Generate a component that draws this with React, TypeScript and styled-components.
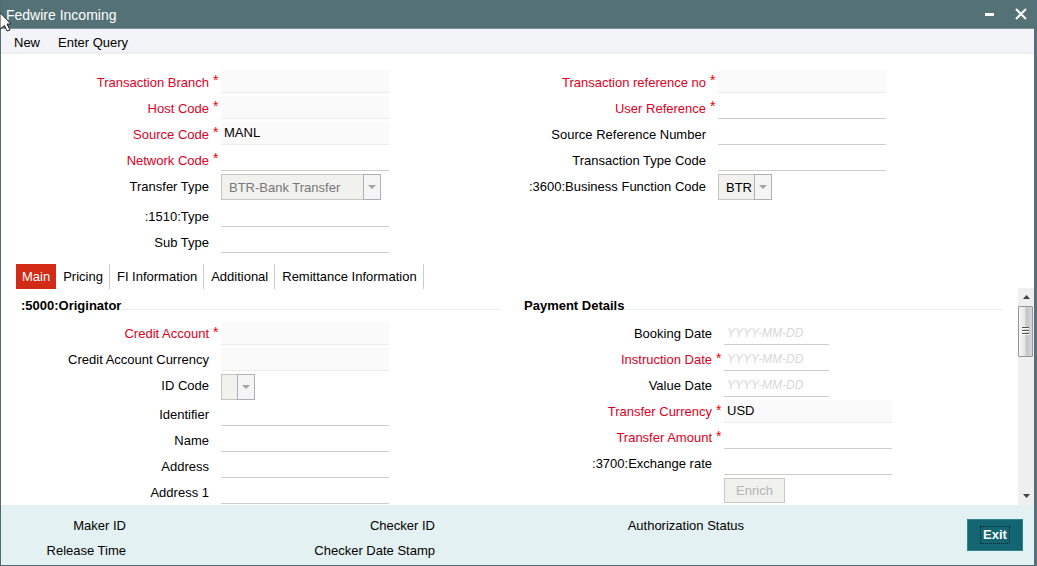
import React, { useId } from "react";
import styled, { createGlobalStyle } from "styled-components";

const GlobalStyle = createGlobalStyle`
  *, *::before, *::after { box-sizing: border-box; }
  body {
    margin: 0;
    background: #fff;
    color: #000;
    font-family: "Liberation Sans", Arial, sans-serif;
    font-size: 13px;
  }
  button, input, select { font: inherit; color: inherit; margin: 0; }
`;

const Window = styled.div`
  position: relative;
  display: flex;
  flex-direction: column;
  min-height: 100vh;
  border: 1px solid #4f6b72;
  border-top: 0;
  border-right: 3px solid #54707a;
  background: #fff;
`;

const TitleBar = styled.header`
  display: flex;
  align-items: center;
  height: 29px;
  padding: 0 7px 0 5px;
  background: #547176;
  border-bottom: 1px solid #7d9599;
  color: #fff;
`;

const Title = styled.h1`
  flex: 1;
  margin: 0;
  padding-top: 2px;
  font-size: 14px;
  font-weight: 400;
  line-height: 26px;
`;

const WindowButton = styled.button`
  display: flex;
  width: 12px;
  height: 12px;
  margin-left: 19px;
  padding: 0;
  border: 0;
  background: none;
`;

const MenuBar = styled.nav`
  display: flex;
  gap: 18px;
  height: 25px;
  padding: 0 13px;
  background: #f3f4f8;
  border-bottom: 2px solid #efeff1;
`;

const MenuItem = styled.button`
  height: 27px;
  padding: 0;
  border: 0;
  background: none;
  line-height: 27px;
`;

const HeaderForm = styled.section`
  display: grid;
  grid-template-columns: 1fr 1fr;
  padding: 16px 24px 8px 15px;
`;

const Row = styled.div<{ $tall?: number }>`
  display: flex;
  align-items: flex-start;
  height: ${(p) => p.$tall ?? 26}px;
`;

const Label = styled.label<{ $required?: boolean }>`
  width: 193px;
  text-align: right;
  line-height: 25px;
  white-space: nowrap;
  color: ${(p) => (p.$required ? "#dc0024" : "#000")};
`;

const Star = styled.span`
  width: 12px;
  padding-left: 4px;
  color: #f00000;
  font-size: 14px;
  line-height: 20px;
`;

const TextInput = styled.input<{ $short?: boolean }>`
  width: ${(p) => (p.$short ? 105 : 168)}px;
  height: 23px;
  padding: 0 3px 1px;
  border: 0;
  border-bottom: 1px solid #ccc;
  border-radius: 0;
  background: transparent;
  outline: 0;

  &:read-only {
    background: #fafafa;
    border-bottom-color: #ececec;
  }
  &::placeholder {
    color: #d8d8d8;
    font-size: 12px;
    font-style: italic;
    opacity: 1;
  }
`;

const SelectBox = styled.span<{ $width: number }>`
  position: relative;
  width: ${(p) => p.$width}px;
  height: 26px;
`;

const SelectInput = styled.select<{ $muted?: boolean }>`
  appearance: none;
  width: 100%;
  height: 100%;
  padding: 0 0 0 7px;
  border: 1px solid #c6c6c0;
  border-radius: 0;
  background: #f1f1ed;
  opacity: 1;
  color: ${(p) => (p.$muted ? "#777" : "#000")};
`;

const SelectArrow = styled.span`
  position: absolute;
  top: 0;
  right: 0;
  bottom: 0;
  display: flex;
  align-items: center;
  justify-content: center;
  width: 18px;
  border: 1px solid #adb0b5;
  background: #f5f5f5;
  pointer-events: none;
`;

const Tabs = styled.div`
  display: flex;
  height: 25px;
  padding: 0 15px;
`;

const Tab = styled.button<{ $active?: boolean }>`
  padding: ${(p) => (p.$active ? "0 6px" : "0 6px 0 7px")};
  border: 0;
  border-right: ${(p) => (p.$active ? "0" : "1px solid #ccc")};
  background: ${(p) => (p.$active ? "#d12a15" : "transparent")};
  color: ${(p) => (p.$active ? "#fff" : "#000")};
  line-height: 25px;
  white-space: nowrap;
`;

const Body = styled.div`
  display: flex;
  flex: 1;
`;

const Sections = styled.div`
  display: grid;
  flex: 1;
  grid-template-columns: 1fr 1fr;
  gap: 19px;
  padding: 6px 15px 0 15px;
`;

const Section = styled.section`
  min-width: 0;

  ${Label} {
    line-height: 23px;
  }
  ${Row}:last-child {
    height: 24px;
  }
`;

const Legend = styled.h2`
  display: flex;
  align-items: center;
  margin: 0 0 5px;
  padding-left: 5px;
  font-size: 13px;
  line-height: 22px;

  &::after {
    content: "";
    flex: 1;
    height: 1px;
    margin-top: 7px;
    background: #ececec;
  }
`;

const EnrichButton = styled.button`
  width: 61px;
  height: 25px;
  margin-left: 205px;
  padding: 0;
  border: 1px solid #c8c8c4;
  background: #f1f1ed;
  color: #b4b4b4;
`;

const ScrollBar = styled.div`
  display: flex;
  flex-direction: column;
  width: 16px;
  margin-top: -1px;
  background: #efefef;
`;

const ScrollButton = styled.button`
  display: flex;
  align-items: center;
  justify-content: center;
  height: 18px;
  padding: 0;
  border: 0;
  background: none;
`;

const Thumb = styled.div`
  display: flex;
  align-items: center;
  justify-content: center;
  width: 15px;
  height: 51px;
  border: 1px solid #979797;
  border-radius: 1px;
  background: linear-gradient(90deg, #f6f6f6, #e4e4e4 45%, #c4c4c6 55%, #d6d6d8);
`;

const Spacer = styled.div`
  flex: 1;
`;

const Footer = styled.footer`
  display: flex;
  justify-content: space-between;
  padding: 8px 11px 2px 0;
  background: #e4f1f2;
`;

const AuditGrid = styled.dl`
  display: grid;
  grid-template-columns: 125px 309px 309px;
  margin: 0;
  text-align: right;
  line-height: 25px;
`;

const ExitButton = styled.button`
  width: 56px;
  height: 32px;
  margin-top: 6px;
  padding: 0;
  border: 1px solid #2c8590;
  background: #136671;
  color: #fff;
  font-size: 13px;
  font-weight: 700;
`;

const FocusRing = styled.span`
  display: inline-block;
  padding: 0 2px;
  border: 1px dotted #02262b;
  line-height: 16px;
`;

const Pointer = styled.svg`
  position: absolute;
  top: 11px;
  left: -1px;
  pointer-events: none;
`;

type FieldProps = {
  label: string;
  required?: boolean;
  readOnly?: boolean;
  value?: string;
  date?: boolean;
};

function Field({ label, required, readOnly, value, date }: FieldProps) {
  const id = useId();
  return (
    <Row>
      <Label htmlFor={id} $required={required}>{label}</Label>
      <Star aria-hidden>{required ? "*" : ""}</Star>
      <TextInput
        id={id}
        required={required}
        readOnly={readOnly}
        defaultValue={value}
        $short={date}
        placeholder={date ? "YYYY-MM-DD" : undefined}
      />
    </Row>
  );
}

type SelectFieldProps = {
  label: string;
  options: string[];
  width: number;
  muted?: boolean;
  rowHeight: number;
};

function SelectField({ label, options, width, muted, rowHeight }: SelectFieldProps) {
  const id = useId();
  return (
    <Row $tall={rowHeight}>
      <Label htmlFor={id}>{label}</Label>
      <Star aria-hidden />
      <SelectBox $width={width}>
        <SelectInput id={id} $muted={muted} disabled={muted}>
          {options.map((o) => <option key={o}>{o}</option>)}
        </SelectInput>
        <SelectArrow>
          <svg width="8" height="4" viewBox="0 0 8 4"><path d="M0 0h8L4 4z" fill="#a3a3a3" /></svg>
        </SelectArrow>
      </SelectBox>
    </Row>
  );
}

const tabs = ["Main", "Pricing", "FI Information", "Additional", "Remittance Information"];

export default function App() {
  return (
    <>
      <GlobalStyle />
      <Window>
        <TitleBar>
          <Title>Fedwire Incoming</Title>
          <WindowButton aria-label="Minimize">
            <svg width="12" height="12" viewBox="0 0 12 12"><path d="M1 5h9v3H1z" fill="#fff" /></svg>
          </WindowButton>
          <WindowButton aria-label="Close">
            <svg width="12" height="12" viewBox="0 0 12 12"><path d="M1 1l10 10M11 1L1 11" stroke="#fff" strokeWidth="2" /></svg>
          </WindowButton>
        </TitleBar>
        <MenuBar>
          <MenuItem>New</MenuItem>
          <MenuItem>Enter Query</MenuItem>
        </MenuBar>

        <HeaderForm>
          <div>
            <Field label="Transaction Branch" required readOnly />
            <Field label="Host Code" required readOnly />
            <Field label="Source Code" required readOnly value="MANL" />
            <Field label="Network Code" required />
            <SelectField label="Transfer Type" options={["BTR-Bank Transfer"]} width={160} muted rowHeight={30} />
            <Field label=":1510:Type" />
            <Field label="Sub Type" />
          </div>
          <div>
            <Field label="Transaction reference no" required readOnly />
            <Field label="User Reference" required />
            <Field label="Source Reference Number" />
            <Field label="Transaction Type Code" />
            <SelectField label=":3600:Business Function Code" options={["BTR"]} width={54} rowHeight={30} />
          </div>
        </HeaderForm>

        <Tabs role="tablist">
          {tabs.map((t, i) => (
            <Tab key={t} role="tab" aria-selected={i === 0} $active={i === 0}>{t}</Tab>
          ))}
        </Tabs>

        <Body>
          <Sections>
            <Section>
              <Legend>:5000:Originator</Legend>
              <Field label="Credit Account" required readOnly />
              <Field label="Credit Account Currency" readOnly />
              <SelectField label="ID Code" options={[""]} width={34} muted rowHeight={29} />
              <Field label="Identifier" />
              <Field label="Name" />
              <Field label="Address" />
              <Field label="Address 1" />
            </Section>
            <Section>
              <Legend>Payment Details</Legend>
              <Field label="Booking Date" date />
              <Field label="Instruction Date" required date />
              <Field label="Value Date" date />
              <Field label="Transfer Currency" required readOnly value="USD" />
              <Field label="Transfer Amount" required />
              <Field label=":3700:Exchange rate" />
              <EnrichButton disabled>Enrich</EnrichButton>
            </Section>
          </Sections>
          <ScrollBar>
            <ScrollButton aria-label="Scroll up">
              <svg width="7" height="4" viewBox="0 0 7 4"><path d="M0 4L3.5 0L7 4z" fill="#404040" /></svg>
            </ScrollButton>
            <Thumb>
              <svg width="8" height="9" viewBox="0 0 8 9"><path d="M0 .5h7M0 3.5h7M0 6.5h7" stroke="#555" /><path d="M0 1.5h7M0 4.5h7M0 7.5h7" stroke="#fff" /></svg>
            </Thumb>
            <Spacer />
            <ScrollButton aria-label="Scroll down">
              <svg width="7" height="4" viewBox="0 0 7 4"><path d="M0 0L3.5 4L7 0z" fill="#404040" /></svg>
            </ScrollButton>
          </ScrollBar>
        </Body>

        <Footer>
          <AuditGrid>
            <dt>Maker ID</dt>
            <dt>Checker ID</dt>
            <dt>Authorization Status</dt>
            <dt>Release Time</dt>
            <dt>Checker Date Stamp</dt>
          </AuditGrid>
          <ExitButton><FocusRing>Exit</FocusRing></ExitButton>
        </Footer>

        <Pointer width="13" height="21" viewBox="0 0 13 21">
          <path d="M0 1.5L11 13H7L10 19L7 20L4.500 14.500L0 18z" fill="#fff" stroke="#222" />
        </Pointer>
      </Window>
    </>
  );
}
